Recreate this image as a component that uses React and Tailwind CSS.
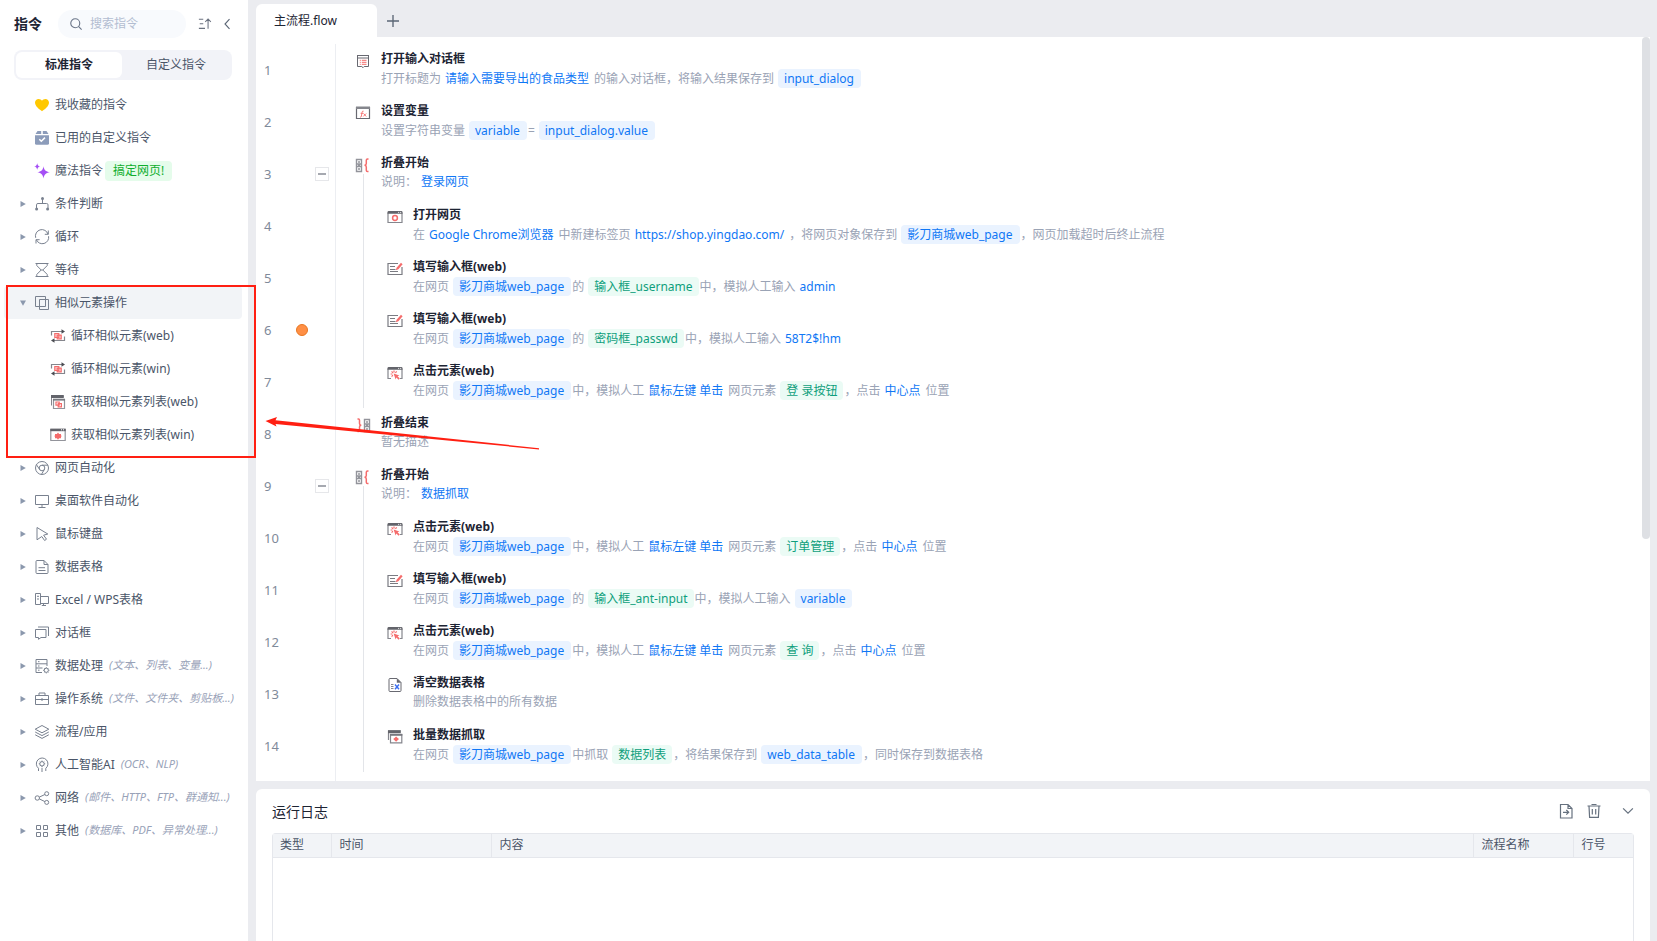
import React from "react";

const RED = "#f56c6c";

function Svg({ children, className = "size-4", box = 16 }) {
  return (
    <svg viewBox={`0 0 ${box} ${box}`} className={`block shrink-0 ${className}`} fill="none" stroke="currentColor" aria-hidden="true">
      {children}
    </svg>
  );
}

/* Icons of the command tree */
const treeIcons = {
  heart: (
    <path d="M8 14.3 C6 13 1 9.6 1 5.6 C1 3.4 2.7 1.9 4.6 1.9 C6.1 1.9 7.3 2.6 8 3.8 C8.7 2.6 9.9 1.9 11.4 1.9 C13.3 1.9 15 3.4 15 5.6 C15 9.6 10 13 8 14.3Z" fill="#ffc800" stroke="none" />
  ),
  used: (
    <>
      <path d="M1 5.2H15V13.2A1.6 1.6 0 0 1 13.4 14.8H2.6A1.6 1.6 0 0 1 1 13.2Z" fill="#8c9cba" stroke="none" />
      <path d="M3.5 1H7.2V4H1.5Z M8.8 1H12.5L14.5 4H8.8Z" fill="#8c9cba" stroke="none" />
      <path d="M5.3 9.2L7.3 11.2L11 7.6" stroke="#fff" strokeWidth="1.5" />
    </>
  ),
  magic: (
    <g fill="#a54ff5" stroke="none">
      <path d="M9.5 3.2C10.2 7.2 11.6 8.5 15.8 9.3C11.6 10.2 10.2 11.5 9.5 15.5C8.8 11.5 7.4 10.2 3.4 9.3C7.4 8.5 8.8 7.2 9.5 3.2Z" />
      <path d="M3.2 0.2C3.6 2.4 4.2 3 6.4 3.5C4.2 3.9 3.6 4.6 3.2 6.8C2.8 4.6 2.2 3.9 0 3.5C2.2 3 2.8 2.4 3.2 .2Z" />
    </g>
  ),
  branch: (
    <>
      <path d="M8.5 3V7.5M2.5 12V8.8Q2.5 7.5 4 7.5H12.5Q14 7.5 14 8.8V12" />
      <g fill="currentColor" stroke="none">
        <circle cx="8.5" cy="2.4" r="1.5" /><circle cx="2.6" cy="13" r="1.5" /><circle cx="13.6" cy="13" r="1.5" />
      </g>
    </>
  ),
  loop: (
    <path d="M1.7 8.8A6.4 6.4 0 0 1 14 5.2M14.3 1.5V5.3H10.8M14.6 7.2A6.4 6.4 0 0 1 2.4 10.8M2 14.5V10.7H5.6" />
  ),
  wait: (
    <path d="M1.5 1.5H14.5M1.5 14.5H14.5M2.8 1.5V3.6L7.2 8L2.8 12.4V14.5M13.2 1.5V3.6L8.8 8L13.2 12.4V14.5M7.2 8H8.8" />
  ),
  similar: <path d="M1.5 1.5H11.5V11.5H1.5ZM5.5 4.5H14.5V14.5H5.5Z" />,
  chrome: (
    <>
      <circle cx="8" cy="8" r="6.5" /><circle cx="8" cy="8" r="2.8" />
      <path d="M8 5.2H14M5.6 9.4L2.4 4.6M10.4 9.4L7.4 14.5" />
    </>
  ),
  desktop: <path d="M1.5 2.5H14.5V11.5H1.5ZM8 11.5V14.5M4.5 14.5H11.5" />,
  mouse: <path d="M3 1.5L13.8 8L9.6 9.2L12.5 13.2L10.6 14.5L7.8 10.5L3 13.8Z" />,
  sheet: <path d="M10 1.5H3Q2 1.5 2 2.5V13.5Q2 14.5 3 14.5H13Q14 14.5 14 13.5V5.5ZM10 1.5V5.5H14M4.5 8.7H11M4.5 11.5H11.5" />,
  excel: <path d="M6.5 12.5H1.5V1.5H6.5V12.5M3 4.3H5M3 7H5M6.5 4.5H14.5V11.5H6.5M9.5 11.5V13.5M7.8 13.5H12" />,
  dialog: <path d="M1.5 4.5H12V12.5H7L4.5 14.3V12.5H1.5ZM4 2H14.5V11" />,
  process: (
    <>
      <path d="M8 14.5H2V1.5H13V8M2 5.8H13M2 10H8.5M4 3.7H5.5M4 8H5.5M4 12.2H5.5" />
      <circle cx="12.3" cy="12.3" r="2.1" />
      <path d="M12.3 9.2V10M12.3 14.6V15.4M9.2 12.3H10M14.6 12.3H15.4M10.2 10.2L10.8 10.8M13.8 13.8L14.4 14.4M14.4 10.2L13.8 10.8M10.8 13.8L10.2 14.4" />
    </>
  ),
  system: <path d="M1.5 4.5H14.5V13.5H1.5ZM5 4.5V2H11V4.5M1.5 8.5H14.5M8 7V10" />,
  layers: <path d="M8 1.5L14.8 5.2L8 8.8L1.2 5.2ZM1.2 8L8 11.6L14.8 8M1.2 10.8L8 14.4L14.8 10.8" />,
  ai: (
    <>
      <path d="M4.5 14V11.3A5.8 5.8 0 1 1 11.8 11.3V14M8 15V11" />
      <circle cx="8" cy="6.8" r="2.2" />
      <path d="M8 3.6V4.6M8 9V10.2M4.8 6.8H5.8M10.2 6.8H11.2M5.7 4.5L6.4 5.2M9.6 8.4L10.3 9.1M10.3 4.5L9.6 5.2M6.4 8.4L5.7 9.1" />
    </>
  ),
  network: (
    <>
      <circle cx="3.3" cy="8" r="2.2" /><circle cx="12.7" cy="3.7" r="2" /><circle cx="12.7" cy="12.4" r="2" />
      <path d="M5.3 7.1L10.9 4.5M5.3 8.9L10.9 11.6" />
    </>
  ),
  other: <path d="M2.5 2.5H6.5V6.5H2.5ZM9.5 2.5H13.5V6.5H9.5ZM2.5 9.5H6.5V13.5H2.5ZM9.5 9.5H13.5V13.5H9.5Z" />,
};

/* Icons of single commands, drawn in grey with a coloured accent */
const stepIcons = {
  loopItem: (
    <>
      <path d="M1.5 7.5V3.5H12M14.5 8.5V12.5H4" stroke="#85868d" strokeWidth="1.2" />
      <path d="M11.5 1.2L15 3.5L11.5 5.8Z M4.5 10.2L1 12.5L4.5 14.8Z" fill="#4b4c52" stroke="none" />
      <path d="M4.8 5.5H8.8V9.5H4.8ZM7.2 7.2H11.2V10.8H7.2Z" stroke={RED} strokeWidth="1.2" fill="#fbd0d0" />
    </>
  ),
  listWeb: (
    <>
      <path d="M1.5 11.5V2.5H13.5" stroke="#85868d" />
      <path d="M1 1H13.8V4H1Z" fill="#63646b" stroke="none" />
      <path d="M3.5 5.5H14.5V14.5H3.5Z" stroke="#93949b" strokeWidth="1.2" />
      <path d="M3 4.7H15V6.6H3Z" fill="#77787f" stroke="none" />
      <path d="M6 8H9.2V11.2H6ZM8.2 9.6H11.4V12.8H8.2Z" stroke={RED} strokeWidth="1.2" />
    </>
  ),
  listWin: (
    <>
      <path d="M.8 2.5H15.2V13.5H.8Z" stroke="#93949b" strokeWidth="1.2" />
      <path d="M.3 1.6H15.7V4.2H.3Z" fill="#63646b" stroke="none" />
      <path d="M11 2.8H12M13 2.8H14" stroke="#fff" />
      <path d="M8 5.5L9.1 7H11V8.4L11.8 9L11 9.8V11.2H9.1L8 12.7L6.9 11.2H5V9.8L4.2 9L5 8.4V7H6.9Z" fill={RED} stroke="none" />
    </>
  ),
  dialogStep: (
    <>
      <path d="M2 2.5H14M2.5 5V13.5H6.8L8 14.7L9.2 13.5H13.5V5M2 5H14M2.5 2.5V5M13.5 2.5V5" stroke="#686971" />
      <path d="M4.8 7.3H5.8M6.8 7.3H11.5M4.8 9.3H5.8M6.8 9.3H11.5M4.8 11.3H5.8M6.8 11.3H11.5" stroke={RED} />
    </>
  ),
  variable: (
    <>
      <path d="M1.5 2.5H14.5V13.5H1.5Z" stroke="#686971" strokeWidth="1.2" />
      <path d="M1 1.5H15V4H1Z" fill="#85868d" stroke="none" />
      <path d="M8.6 6.2Q7.2 5.6 7 7.6L6.3 11.5Q6 12.5 5 12M5.6 8.3H8.3M8.6 8.5L11.2 11.5M11.2 8.5L8.2 11.5" stroke={RED} strokeWidth=".9" />
    </>
  ),
  foldStart: (
    <>
      <path d="M1.5 2.5H6.5V7H1.5ZM1.5 9.5H6.5V14.5H1.5ZM1.5 7V9.5M6.5 7V9.5M3 5H5M3 8.2H5M3 12H5" stroke="#93949b" strokeWidth="1.4" />
      <path d="M13.5 2H12.5Q11.3 2 11.3 3.2V6.6Q11.3 8 9.6 8.3Q11.3 8.6 11.3 10V13.2Q11.3 14.5 12.5 14.5H13.5" stroke={RED} strokeWidth="1.5" />
    </>
  ),
  foldEnd: (
    <>
      <path d="M9.5 2.5H14.5V7H9.5ZM9.5 9.5H14.5V14.5H9.5ZM9.5 7V9.5M14.5 7V9.5M11 5H13M11 8.2H13M11 12H13" stroke="#93949b" strokeWidth="1.4" />
      <path d="M2.5 2H3.5Q4.5 2 4.5 3.2V6.6Q4.5 8 6.2 8.3Q4.5 8.6 4.5 10V13.2Q4.5 14.5 3.5 14.5H2.5" stroke={RED} strokeWidth="1.5" />
    </>
  ),
  openWeb: (
    <>
      <path d="M1 4V13.5H15V4" stroke="#85868d" strokeWidth="1.2" />
      <path d="M.5 4.8V3.2Q.5 2 1.7 2H14.3Q15.5 2 15.5 3.2V4.8Z" fill="#63646b" stroke="none" />
      <path d="M11.2 3.4H12.2M13.2 3.4H14.2" stroke="#fff" />
      <circle cx="8" cy="9" r="2.4" stroke={RED} strokeWidth="1.5" />
    </>
  ),
  fill: (
    <>
      <path d="M11 2.5H1V13.5H15V6" stroke="#7a7b82" strokeWidth="1.2" />
      <path d="M3 5.5H8M3 8.5H8.5M3 10.5H11" stroke="#7a7b82" />
      <path d="M8.8 9.2L9.6 6.8L14 1.8L15.6 3.2L11.4 8.2Z" fill={RED} stroke="none" />
    </>
  ),
  click: (
    <>
      <path d="M4 13.5H1V4M15 4V13.5H13" stroke="#85868d" strokeWidth="1.2" />
      <path d="M.5 4.8V3.2Q.5 2 1.7 2H14.3Q15.5 2 15.5 3.2V4.8Z" fill="#63646b" stroke="none" />
      <path d="M11.2 3.4H12.2M13.2 3.4H14.2" stroke="#fff" />
      <path d="M7 5.6V7.4M3.6 9H5.4M4.6 6.4L5.9 7.8M9.7 6.4L8.4 7.8M4.6 11.6L5.9 10.2" stroke={RED} strokeWidth="1.2" />
      <path d="M6.6 8.4L12.4 10.4L10.6 11.3L12.8 13.5L11.6 14.7L9.4 12.5L8.6 14.4Z" fill={RED} stroke="none" />
    </>
  ),
  clear: (
    <>
      <path d="M10 1.5H3Q2 1.5 2 2.5V13.5Q2 14.5 3 14.5H13Q14 14.5 14 13.5V5.5Z" stroke="#686971" />
      <path d="M9.8 1.3V5.7H14.2Z" fill="#686971" stroke="none" />
      <path d="M4 7.5H6.5M4 9.5H6.5M4 11.5H6.5" stroke="#85868d" />
      <path d="M8 7.5L12 12.2M12 7.5L8 12.2" stroke="#3c6ff0" strokeWidth="1.4" />
    </>
  ),
  scrape: (
    <>
      <path d="M1.5 11V2H13.5" stroke="#85868d" strokeWidth="1.2" />
      <path d="M1 1.2H13.8V4.2H1Z" fill="#63646b" stroke="none" />
      <path d="M3.5 5.5H14.8V13.8H3.5Z" stroke="#85868d" strokeWidth="1.2" />
      <path d="M3 4.8H15.3V6.8H3Z" fill="#77787f" stroke="none" />
      <path d="M9.1 7.5L10.4 8.8L12 10.1L10.4 11.4L9.1 12.7L7.8 11.4L6.2 10.1L7.8 8.8Z" fill={RED} stroke="none" />
    </>
  ),
};

const favourites = [
  { icon: "heart", label: "我收藏的指令" },
  { icon: "used", label: "已用的自定义指令" },
  { icon: "magic", label: "魔法指令", badge: "搞定网页!" },
];

const groups = [
  { icon: "branch", label: "条件判断" },
  { icon: "loop", label: "循环" },
  { icon: "wait", label: "等待" },
  {
    icon: "similar",
    label: "相似元素操作",
    children: [
      { icon: "loopItem", label: "循环相似元素(web)" },
      { icon: "loopItem", label: "循环相似元素(win)" },
      { icon: "listWeb", label: "获取相似元素列表(web)" },
      { icon: "listWin", label: "获取相似元素列表(win)" },
    ],
  },
  { icon: "chrome", label: "网页自动化" },
  { icon: "desktop", label: "桌面软件自动化" },
  { icon: "mouse", label: "鼠标键盘" },
  { icon: "sheet", label: "数据表格" },
  { icon: "excel", label: "Excel / WPS表格" },
  { icon: "dialog", label: "对话框" },
  { icon: "process", label: "数据处理", hint: "(文本、列表、变量...)" },
  { icon: "system", label: "操作系统", hint: "(文件、文件夹、剪贴板...)" },
  { icon: "layers", label: "流程/应用" },
  { icon: "ai", label: "人工智能AI", hint: "(OCR、NLP)" },
  { icon: "network", label: "网络", hint: "(邮件、HTTP、FTP、群通知...)" },
  { icon: "other", label: "其他", hint: "(数据库、PDF、异常处理...)" },
];

/* Description parts: plain string, v = value, t = variable tag, e = element tag */
const v = (text) => ({ kind: "value", text });
const t = (text) => ({ kind: "variable", text });
const e = (text) => ({ kind: "element", text });
const page = t("影刀商城web_page");

const clickStep = (target) => ({
  icon: "click",
  title: "点击元素(web)",
  nested: true,
  parts: ["在网页", page, "中，模拟人工", v("鼠标左键 单击"), "网页元素", e(target), "，点击", v("中心点"), "位置"],
});

const steps = [
  { icon: "dialogStep", title: "打开输入对话框", parts: ["打开标题为", v("请输入需要导出的食品类型"), "的输入对话框，将输入结果保存到", t("input_dialog")] },
  { icon: "variable", title: "设置变量", parts: ["设置字符串变量", t("variable"), "=", t("input_dialog.value")] },
  { icon: "foldStart", title: "折叠开始", fold: true, parts: ["说明：", v("登录网页")] },
  { icon: "openWeb", title: "打开网页", nested: true, parts: ["在", v("Google Chrome浏览器"), "中新建标签页", v("https://shop.yingdao.com/"), "，将网页对象保存到", page, "，网页加载超时后终止流程"] },
  { icon: "fill", title: "填写输入框(web)", nested: true, parts: ["在网页", page, "的", e("输入框_username"), "中，模拟人工输入", v("admin")] },
  { icon: "fill", title: "填写输入框(web)", nested: true, breakpoint: true, parts: ["在网页", page, "的", e("密码框_passwd"), "中，模拟人工输入", v("58T2$!hm")] },
  clickStep("登 录按钮"),
  { icon: "foldEnd", title: "折叠结束", parts: ["暂无描述"] },
  { icon: "foldStart", title: "折叠开始", fold: true, parts: ["说明：", v("数据抓取")] },
  clickStep("订单管理"),
  { icon: "fill", title: "填写输入框(web)", nested: true, parts: ["在网页", page, "的", e("输入框_ant-input"), "中，模拟人工输入", t("variable")] },
  clickStep("查 询"),
  { icon: "clear", title: "清空数据表格", nested: true, parts: ["删除数据表格中的所有数据"] },
  { icon: "scrape", title: "批量数据抓取", nested: true, parts: ["在网页", page, "中抓取", e("数据列表"), "，将结果保存到", t("web_data_table"), "，同时保存到数据表格"] },
];

function Part({ part }) {
  if (typeof part === "string") return <span>{part}</span>;
  if (part.kind === "value") return <span className="ml-1 mr-[5px] text-[#0f77f5]">{part.text}</span>;
  if (part.kind === "variable")
    return <span className="ml-1 mr-px rounded bg-[#eaf3ff] pl-1.5 pr-[7px] text-[#0f77f5]">{part.text}</span>;
  return <span className="ml-1 mr-px rounded bg-[#ebfbf5] px-1.5 text-[#0f9f7c]">{part.text}</span>;
}

function Step({ step, number }) {
  const tagged = step.parts.some((p) => p.kind === "variable" || p.kind === "element");
  return (
    <li className="flex h-13">
      <div className="flex w-20 shrink-0 items-center border-r border-[#eceef2] pl-2 pr-[6px]">
        <span className="w-8 pt-0.5 text-[13px] text-[#7f8a9a]">{number}</span>
        {step.breakpoint && <span className="size-3 rounded-full border border-[#e87722] bg-[#ff8f45]" />}
        {step.fold && (
          <button type="button" aria-label="折叠" className="ml-auto flex size-3.5 items-center justify-center border border-[#e6e7ea] bg-white">
            <span className="h-0.5 w-2 bg-[#a6a9b0]" />
          </button>
        )}
      </div>
      <div className="flex w-[35px] shrink-0 justify-end">
        <div className="flex w-4 flex-col items-center pt-[9px]">
          {!step.nested && (
            <Svg>{stepIcons[step.icon]}</Svg>
          )}
          {(step.fold || step.nested) && (
            <span className={step.nested ? "-mt-[9px] w-px grow bg-[#e3e5e9]" : "mt-px w-px grow bg-[#e3e5e9]"} />
          )}
        </div>
      </div>
      {step.nested && (
        <div className="ml-4 shrink-0 pt-[9px]">
          <Svg>{stepIcons[step.icon]}</Svg>
        </div>
      )}
      <div className="ml-2.5 min-w-0 whitespace-nowrap pt-[6px]">
        <h3 className="text-[12px] leading-[18px] font-bold text-[#1d2433]">{step.title}</h3>
        <p className={tagged ? "mt-px flex text-[12px] leading-[19px] text-[#9aa3b5]" : "flex text-[12px] leading-[19px] text-[#9aa3b5]"}>
          {step.parts.map((part, i) => (
            <Part key={i} part={part} />
          ))}
        </p>
      </div>
    </li>
  );
}

function Caret({ open }) {
  return (
    <svg viewBox="0 0 6 6" className="size-1.5 shrink-0 fill-[#8b98ad]" aria-hidden="true">
      <path d={open ? "M0 .5H6L3 5.8Z" : "M.5 0L5.8 3L.5 6Z"} />
    </svg>
  );
}

function Sidebar() {
  return (
    <aside className="flex w-62 shrink-0 flex-col bg-white text-[12px] text-[#4a5568]">
      <header className="flex h-[47px] items-center pl-3.5 pr-3.5">
        <h1 className="w-11 text-[14px] font-bold text-[#1d2433]">指令</h1>
        <label className="flex h-7 w-32 items-center gap-2 rounded-full bg-[#f8fafd] pl-3 text-[#6b7689]">
          <Svg className="size-3">
            <circle cx="7" cy="7" r="6" strokeWidth="1.5" />
            <path d="M11.3 11.3L15.5 15.5" strokeWidth="1.5" />
          </Svg>
          <input type="text" aria-label="搜索指令" placeholder="搜索指令" className="w-24 bg-transparent text-[12px] outline-none placeholder:text-[#b3bdd1]" />
        </label>
        <button type="button" aria-label="排序" className="ml-3 text-[#6b7280]">
          <Svg className="size-3.5"><path d="M1 2.5H6M2 7.8H6M1 13H8M11.5 13.5V2.5M8.3 5.5L11.5 2.2L14.7 5.5" strokeWidth="1.2" /></Svg>
        </button>
        <button type="button" aria-label="收起" className="ml-auto text-[#5b6675]">
          <Svg className="size-3"><path d="M10 1.5L4 8L10 14.5" strokeWidth="1.5" /></Svg>
        </button>
      </header>
      <div className="ml-3.5 mr-4 mt-[3px] grid h-[30px] grid-cols-[106px_1fr] rounded-lg bg-[#f2f3f8] p-0.5">
        <button type="button" className="rounded-md bg-white font-bold text-[#1d2433]">标准指令</button>
        <button type="button">自定义指令</button>
      </div>
      <nav className="mt-2 pl-1 pr-1.5">
        <ul>
          {favourites.map((item) => (
            <li key={item.label} className="flex h-[33px] items-center pl-[30px]">
              <Svg>{treeIcons[item.icon]}</Svg>
              <span className="ml-[5px]">{item.label}</span>
              {item.badge && <span className="ml-0.5 rounded-sm bg-[#e5fceb] px-2 text-[12px] leading-5 text-[#0fae2d]">{item.badge}</span>}
            </li>
          ))}
          {groups.map((item) => (
            <li key={item.label}>
              <button type="button" className={item.children ? "flex h-[33px] w-full items-center rounded bg-[#f2f4f7] pl-4 whitespace-nowrap" : "flex h-[33px] w-full items-center pl-4 whitespace-nowrap"}>
                <Caret open={Boolean(item.children)} />
                <span className="ml-2 text-[#79818f]"><Svg>{treeIcons[item.icon]}</Svg></span>
                <span className="ml-[5px]">{item.label}</span>
                {item.hint && <span className="ml-1.5 text-[11px] text-[#98a2b8] italic">{item.hint}</span>}
              </button>
              {item.children && (
                <ul>
                  {item.children.map((child) => (
                    <li key={child.label} className="flex h-[33px] items-center pl-[46px]">
                      <Svg>{stepIcons[child.icon]}</Svg>
                      <span className="ml-[5px]">{child.label}</span>
                    </li>
                  ))}
                </ul>
              )}
            </li>
          ))}
        </ul>
      </nav>
    </aside>
  );
}

function LogPanel() {
  return (
    <section className="flex h-38 shrink-0 flex-col rounded-t-md bg-white px-4">
      <header className="flex h-11 shrink-0 items-center text-[#66717f]">
        <h2 className="mr-auto text-[14px] text-[#1d2433]">运行日志</h2>
        <button type="button" aria-label="导出">
          <Svg><path d="M10 1.5H2.5V15H14V5.5ZM10 1.5V5.5H14M5 9.3H10.5M8.3 7L10.7 9.3L8.3 11.6" strokeWidth="1.2" /></Svg>
        </button>
        <button type="button" aria-label="清空" className="ml-3">
          <Svg><path d="M1.5 3H14.5M5.5 1.5H10.5M3 3L3.6 14.3H12.4L13 3M6.3 6V11.5M9.7 6V11.5" strokeWidth="1.2" /></Svg>
        </button>
        <button type="button" aria-label="折叠日志" className="ml-5">
          <Svg className="size-3"><path d="M1.5 4.5L8 11L14.5 4.5" strokeWidth="1.6" /></Svg>
        </button>
      </header>
      <div className="grow rounded-t border border-b-0 border-[#e5e7ec]">
        <table className="w-full table-fixed text-left text-[12px] text-[#4a5568]">
          <thead className="bg-[#f2f4f7]">
            <tr className="h-[23px] border-b border-[#e5e7ec]">
              <th className="w-[58px] border-r border-[#e5e7ec] p-0 pl-[7px] leading-5 font-normal">类型</th>
              <th className="w-40 border-r border-[#e5e7ec] p-0 pl-2 leading-5 font-normal">时间</th>
              <th className="border-r border-[#e5e7ec] p-0 pl-2 leading-5 font-normal">内容</th>
              <th className="w-25 border-r border-[#e5e7ec] p-0 pl-2 leading-5 font-normal">流程名称</th>
              <th className="w-15 p-0 pl-2 leading-5 font-normal">行号</th>
            </tr>
          </thead>
          <tbody />
        </table>
      </div>
    </section>
  );
}

export default function App() {
  return (
    <div className="relative flex h-screen overflow-hidden bg-[#ebecf0] font-['Noto_Sans','Noto_Sans_CJK_SC',sans-serif]">
      <Sidebar />
      <main className="flex min-w-0 grow flex-col pl-2 pr-[7px]">
        <div className="flex h-[37px] shrink-0 items-end">
          <button type="button" className="h-[33px] w-[121px] rounded-t-md bg-white pl-[18px] text-left text-[12px] text-[#1d2433]">主流程.flow</button>
          <button type="button" aria-label="新建流程" className="mb-2.5 ml-2.5 text-[#5b6675]">
            <Svg className="size-3"><path d="M8 0V16M0 8H16" strokeWidth="1.8" /></Svg>
          </button>
        </div>
        <section className="relative min-h-0 grow overflow-hidden bg-white">
          <ol className="flex flex-col pt-[7px]">
            {steps.map((step, i) => (
              <Step key={i} step={step} number={i + 1} />
            ))}
            <li aria-hidden="true" className="h-3 w-20 border-r border-[#eceef2]" />
          </ol>
          <div className="absolute top-0 right-0 h-[502px] w-2 rounded-full bg-[#dee0e4]" />
        </section>
        <div className="mt-2 flex shrink-0 flex-col"><LogPanel /></div>
      </main>
      {/* Callout box and arrow over the page */}
      <div className="pointer-events-none absolute top-[285px] left-[6px] h-[173px] w-[250px] border-2 border-[#ff1f12]" />
      <svg className="pointer-events-none absolute top-[415px] left-[264px] h-9 w-[277px]" viewBox="0 0 277 36" aria-hidden="true">
        <path d="M1.5 6L13 2L11.5 5.2L275 33.2V34.4L11.5 9L12.5 11.5Z" fill="#ff1f12" />
      </svg>
    </div>
  );
}
